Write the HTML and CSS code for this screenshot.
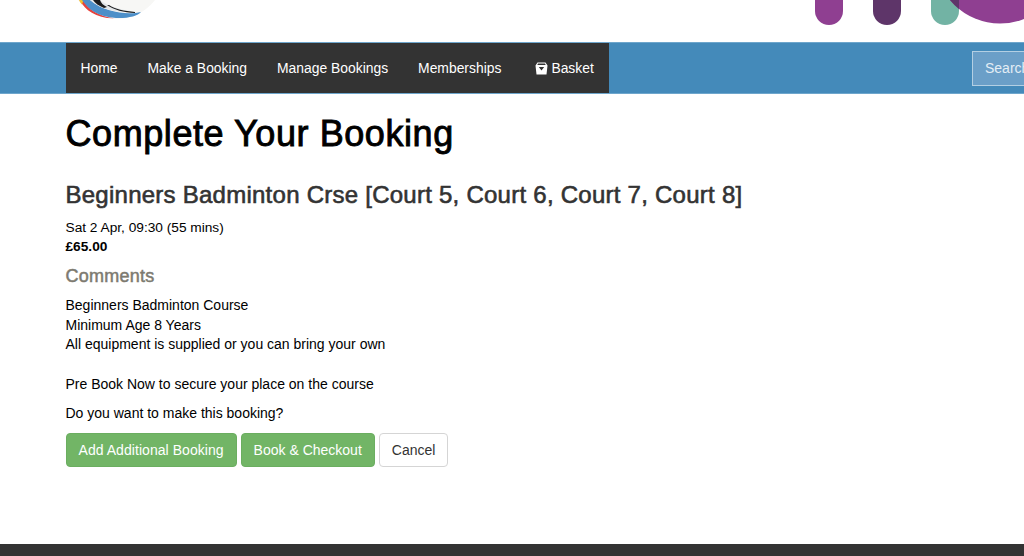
FILE: index.html
```html
<!DOCTYPE html>
<html lang="en">
<head>
<meta charset="utf-8">
<title>Complete Your Booking</title>
<link rel="stylesheet" href="styles.css">
</head>
<body>
<header class="brand">
  <svg class="logo" width="78" height="19" viewBox="0 0 78 19" aria-hidden="true">
    <circle cx="38.500" cy="-29.500" r="48.500" fill="#f7f7f5"/>
    <path d="M1.500 0C7 10 18 18.500 36 18.300C20 16 10 9 5 0Z" fill="#e8423c"/>
    <path d="M1 0C1.500 1.500 2.500 3 4 4.500L5.500 0Z" fill="#f2c230"/>
    <path d="M4 0C10 9 20 17 38 18C50 18.500 60 16 63 12C50 15 28 13 12 0Z" fill="#4d8fc8"/>
    <path d="M12 0C20 7 32 13 60 12.500C42 10 30 6 22 0Z" fill="#e3e6e8"/>
    <path d="M15 0C17 3 21 6 26 8L29 7C25 5 23 3 22 0Z" fill="#1b1b1b"/>
    <path d="M29 5C36 10 46 12.500 57 13L57 12C46 11 37 9 31 5Z" fill="#1b1b1b"/>
  </svg>
  <svg class="art" width="209" height="25" viewBox="0 0 209 25" aria-hidden="true">
    <path d="M0 0H28V11A14 14 0 0 1 0 11Z" fill="#8f3f91"/>
    <path d="M58 0H86V11A14 14 0 0 1 58 11Z" fill="#5e3569"/>
    <path d="M116 0H144V11A14 14 0 0 1 116 11Z" fill="#72b3a4"/>
    <circle cx="185" cy="-41.500" r="65" fill="#8f3f91"/>
    <path d="M135 0H144V9A65 65 0 0 1 135 0Z" fill="#5e3569"/>
  </svg>
</header>
<nav class="navbar">
  <ul class="menu">
    <li><a href="#">Home</a></li>
    <li><a href="#">Make a Booking</a></li>
    <li><a href="#">Manage Bookings</a></li>
    <li><a href="#">Memberships</a></li>
    <li><a href="#"><svg class="bag" width="13" height="13" viewBox="0 0 13 13" aria-hidden="true"><path fill-rule="evenodd" d="M2.500 .5H10.500L12.500 3.500L11.500 12.500H1.500L.5 3.500ZM3 1.500L2.300 3H10.700L10 1.500ZM3.800 5L6.500 8.500L9.200 5Z" fill="#fff"/></svg>Basket</a></li>
  </ul>
  <input class="search" type="text" placeholder="Search">
</nav>
<main class="content">
  <h1>Complete Your Booking</h1>
  <h2>Beginners Badminton Crse [Court 5, Court 6, Court 7, Court 8]</h2>
  <p class="when">Sat 2 Apr, 09:30 (55 mins)<br><strong>£65.00</strong></p>
  <h3>Comments</h3>
  <p class="notes">Beginners Badminton Course<br>Minimum Age 8 Years<br>All equipment is supplied or you can bring your own<br><br>Pre Book Now to secure your place on the course</p>
  <p class="ask">Do you want to make this booking?</p>
  <div class="actions">
    <a class="btn green wide" href="#">Add Additional Booking</a>
    <a class="btn green" href="#">Book &amp; Checkout</a>
    <a class="btn plain" href="#">Cancel</a>
  </div>
</main>
<footer class="foot"></footer>
</body>
</html>
```
FILE: styles.css
```css
* { box-sizing: border-box; }
html, body { height: 100%; }
body {
  margin: 0;
  height: 556px;
  overflow: hidden;
  display: flex;
  flex-direction: column;
  font-family: "Liberation Sans", Arial, sans-serif;
  font-size: 14px;
  line-height: 19.700px;
  color: #000;
  background: #fff;
}
.brand {
  height: 42px;
  flex: none;
  display: flex;
  justify-content: space-between;
  align-items: flex-start;
  padding-left: 78px;
}
.logo, .art { display: block; }
.navbar {
  height: 52px;
  flex: none;
  display: flex;
  align-items: center;
  justify-content: space-between;
  padding-left: 65.500px;
  background: #448aba;
  border-top: 1px solid #6ea6cc;
  border-bottom: 1px solid #6ea6cc;
  overflow: hidden;
}
.menu {
  list-style: none;
  margin: 0;
  padding: 0;
  display: flex;
  height: 50px;
  background: #333;
  font-size: 13.880px;
}
.menu a {
  display: flex;
  align-items: center;
  gap: 3px;
  height: 50px;
  padding: 1px 15px 0;
  color: #fff;
  text-decoration: none;
}
.bag { display: block; margin-left: 4px; }
.search {
  flex: none;
  width: 120px;
  height: 35px;
  margin-right: -68px;
  padding: 0 12px;
  background: #6b9fc8;
  border: 1px solid #b3cfe3;
  border-radius: 0;
  font: inherit;
  color: #fff;
}
.search::placeholder { color: #e3edf5; opacity: 1; }
.content {
  flex: 1;
  padding: 0 65.500px;
}
h1 {
  margin: 20px 0 0;
  font-size: 36px;
  line-height: 40px;
  font-weight: 400;
  letter-spacing: 0.570px;
  -webkit-text-stroke: 0.9px #000;
  color: #000;
}
h2 {
  margin: 26px 0 0;
  font-size: 24px;
  line-height: 30px;
  font-weight: 400;
  letter-spacing: 0.250px;
  -webkit-text-stroke: 0.6px #333;
  color: #333;
}
.when { margin: 8px 0 0; font-size: 13.700px; line-height: 19px; }
h3 {
  margin: 10px 0 0;
  font-size: 18px;
  line-height: 20px;
  font-weight: 400;
  letter-spacing: 0.250px;
  -webkit-text-stroke: 0.5px #7d7a70;
  color: #7d7a70;
}
.notes { margin: 10px 0 0; }
.ask { margin: 9px 0 0; }
.actions {
  margin-top: 10px;
  display: flex;
  align-items: center;
  gap: 4px;
}
.btn {
  height: 34px;
  display: flex;
  align-items: center;
  padding: 1px 12px 0;
  border-radius: 4px;
  border: 1px solid;
  text-decoration: none;
}
.wide { letter-spacing: 0.050px; }
.green { background: #72b566; border-color: #6bae60; color: #fff; }
.plain { background: #fff; border-color: #d5d5d5; color: #333; }
.foot { height: 12px; flex: none; background: #333; }
```
